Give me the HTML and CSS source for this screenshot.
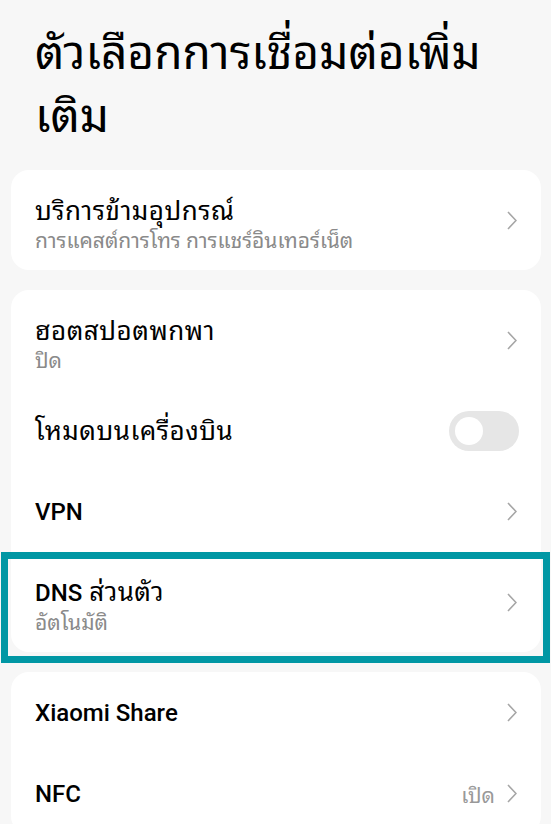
FILE: index.html
```html
<!DOCTYPE html>
<html lang="th">
<head>
    <meta charset="UTF-8">
    <meta name="viewport" content="width=device-width, initial-scale=1.0">
    <title>ตัวเลือกการเชื่อมต่อเพิ่มเติม</title>
    <link rel="stylesheet" href="styles.css">
</head>
<body>
    <h1 class="page-title">ตัวเลือกการเชื่อมต่อเพิ่ม<br>เติม</h1>

    <div class="card">
        <div class="row two-line">
            <div class="row-text">
                <div class="row-title">บริการข้ามอุปกรณ์</div>
                <div class="row-sub">การแคสต์การโทร การแชร์อินเทอร์เน็ต</div>
            </div>
            <svg class="chevron" viewBox="0 0 10 19"><path d="M1 1 L9 9.5 L1 18"/></svg>
        </div>
    </div>

    <div class="card">
        <div class="row two-line">
            <div class="row-text">
                <div class="row-title">ฮอตสปอตพกพา</div>
                <div class="row-sub">ปิด</div>
            </div>
            <svg class="chevron" viewBox="0 0 10 19"><path d="M1 1 L9 9.5 L1 18"/></svg>
        </div>
        <div class="row">
            <div class="row-text">
                <div class="row-title">โหมดบนเครื่องบิน</div>
            </div>
            <div class="toggle"><div class="toggle-thumb"></div></div>
        </div>
        <div class="row">
            <div class="row-text">
                <div class="row-title"><span class="latin">VPN</span></div>
            </div>
            <svg class="chevron" viewBox="0 0 10 19"><path d="M1 1 L9 9.5 L1 18"/></svg>
        </div>
        <!-- แถวที่ถูกไฮไลต์ -->
        <div class="row two-line highlighted">
            <div class="row-text">
                <div class="row-title"><span class="latin">DNS</span> ส่วนตัว</div>
                <div class="row-sub">อัตโนมัติ</div>
            </div>
            <svg class="chevron" viewBox="0 0 10 19"><path d="M1 1 L9 9.5 L1 18"/></svg>
        </div>
    </div>

    <div class="card">
        <div class="row">
            <div class="row-text">
                <div class="row-title"><span class="latin">Xiaomi Share</span></div>
            </div>
            <svg class="chevron" viewBox="0 0 10 19"><path d="M1 1 L9 9.5 L1 18"/></svg>
        </div>
        <div class="row">
            <div class="row-text">
                <div class="row-title"><span class="latin">NFC</span></div>
            </div>
            <span class="row-value">เปิด</span>
            <svg class="chevron" viewBox="0 0 10 19"><path d="M1 1 L9 9.5 L1 18"/></svg>
        </div>
    </div>
</body>
</html>
```

FILE: styles.css
```css
/* หน้าจอการตั้งค่า */
body {
    margin: 0;
    background-color: #f7f7f7;
    font-family: Roboto, "Noto Sans Thai Looped", "Noto Sans Thai", sans-serif;
    color: #000;
    overflow: hidden;
}

.page-title {
    margin: 0;
    padding: 22px 30px 22px 35px;
    font-size: 46px;
    font-weight: normal;
    line-height: 63px;
}

.card {
    background-color: #fff;
    border-radius: 18px;
    margin: 0 10px 20px 11px;
}

.row {
    display: flex;
    align-items: center;
    height: 81px;
    padding: 0 24px;
}

.row.two-line {
    height: 100px;
}

.row-text {
    flex: 1;
}

.two-line .row-text {
    padding-top: 9px;
}

.row-title {
    font-size: 26px;
    letter-spacing: 0.5px;
    line-height: 30px;
}

.latin {
    font-size: 24px;
    font-weight: 500;
    letter-spacing: 0;
}

.row-sub {
    font-size: 21px;
    color: #8a8a8a;
    line-height: 25px;
    margin-top: 3px;
}

.row-value {
    font-size: 21px;
    color: #999;
    margin-right: 12px;
}

.chevron {
    width: 10px;
    height: 19px;
    fill: none;
    stroke: #a6a6a6;
    stroke-width: 1.6;
}

.toggle {
    width: 70px;
    height: 40px;
    border-radius: 20px;
    background-color: #e6e6e6;
    margin-right: -2px;
    display: flex;
    align-items: center;
    padding-left: 6px;
    box-sizing: border-box;
}

.toggle-thumb {
    width: 28px;
    height: 28px;
    border-radius: 50%;
    background-color: #fff;
}

.highlighted {
    position: relative;
}

.highlighted::after {
    content: "";
    position: absolute;
    top: 0;
    left: -10px;
    right: -9px;
    bottom: -11px;
    border: 7px solid #0097a4;
}
```
